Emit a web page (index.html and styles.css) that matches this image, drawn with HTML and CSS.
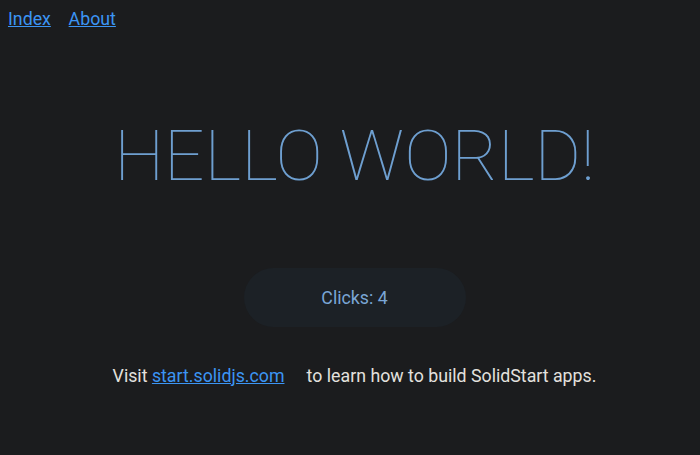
FILE: index.html
```html
<!DOCTYPE html>
<html>
<head>
<meta charset="utf-8">
<link rel="stylesheet" href="styles.css">
</head>
<body>
<nav class="nav"><a href="#" class="nav-link">Index</a><a href="#" class="nav-link">About</a></nav>
<main class="main">
  <h1 class="title">Hello world!</h1>
  <button class="increment">Clicks: 4</button>
  <p class="info">Visit <a href="#" class="info-link">start.solidjs.com</a> to learn how to build SolidStart apps.</p>
</main>
</body>
</html>
```
FILE: styles.css
```css
html {
  font-size: 17.75px;
  background: #1b1c1e;
}
body {
  margin: 8px;
  font-family: Roboto, "Open Sans", sans-serif;
  font-size: 1rem;
  color: #e3e1de;
}
.nav {
  display: flex;
  gap: 1rem;
  padding-top: 1px;
}
.nav-link, .info-link {
  color: #3c95f4;
}
.info-link {
  margin-right: 1rem;
}
.main {
  text-align: center;
  padding: 1rem 1rem 1rem calc(1rem + 9px);
  margin: 0 auto;
}
.title {
  color: #6e9fd0;
  text-transform: uppercase;
  font-size: 4rem;
  font-weight: 100;
  line-height: 1.1;
  margin: calc(4rem - 1px) auto calc(4rem + 2px);
}
.increment {
  font-family: inherit;
  font-size: inherit;
  padding: 1rem 2rem;
  color: #7aa6d6;
  background-color: #1c2126;
  border-radius: 2rem;
  border: 2px solid transparent;
  width: 222px;
  box-sizing: border-box;
}
.info {
  margin: calc(2rem + 2px) auto 2rem;
  line-height: 1.35;
}
```
